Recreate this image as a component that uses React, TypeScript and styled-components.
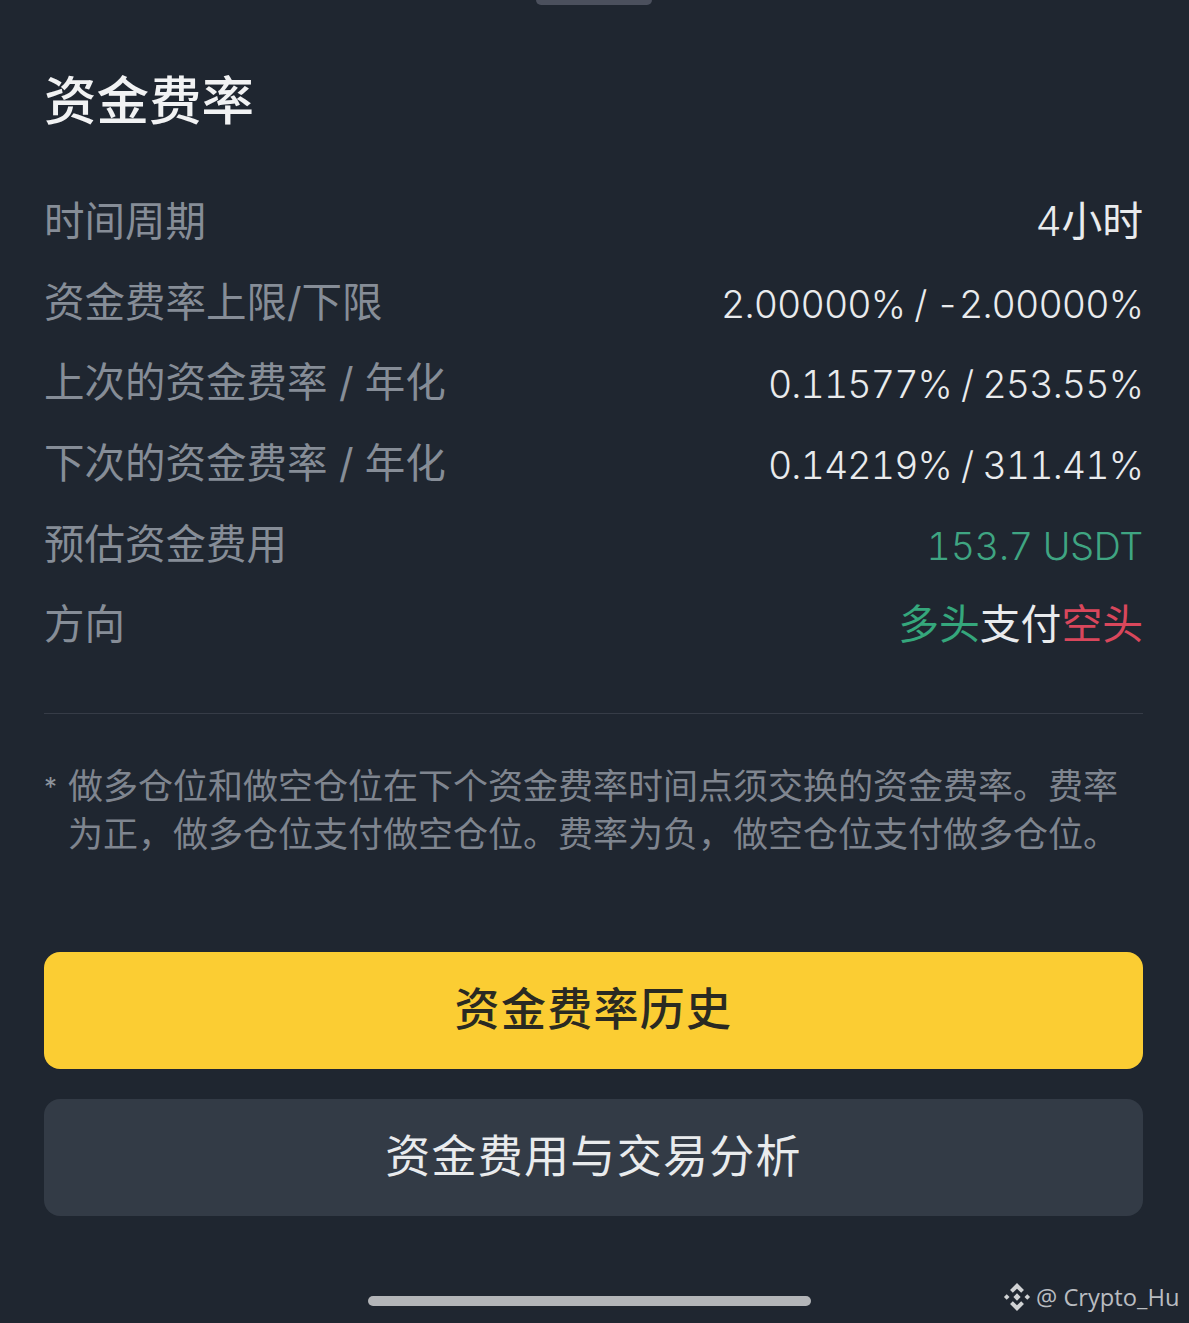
import React from "react";
import styled, { createGlobalStyle } from "styled-components";

const FONT = `Inter, "Noto Sans CJK SC", sans-serif`;

const Global = createGlobalStyle`
  html, body { margin: 0; padding: 0; background: #1f2630; }
  #root { width: 1189px; height: 1323px; }
`;

const Sheet = styled.div`
  position: relative;
  width: 1189px;
  height: 1323px;
  box-sizing: border-box;
  padding: 0 46px 0 44px;
  overflow: hidden;
  background: #1f2630;
  font-family: ${FONT};
  display: flex;
  flex-direction: column;
`;

const Grabber = styled.div`
  align-self: center;
  width: 116px;
  height: 5px;
  flex: none;
  border-radius: 0 0 6px 6px;
  background: #4b505d;
`;

const Title = styled.h1`
  margin: 65px 0 0 0;
  height: 62px;
  font-size: 52.5px;
  line-height: 62px;
  font-weight: 500;
  color: #f1f2f3;
`;

const Rows = styled.div`
  margin-top: 46px;
  display: flex;
  flex-direction: column;
`;

const Row = styled.div`
  height: 80.7px;
  display: flex;
  align-items: center;
  justify-content: space-between;
`;

const Label = styled.span`
  font-size: 40.5px;
  font-weight: 400;
  color: #868d97;
  white-space: nowrap;
`;

const Value = styled.span<{ $tone?: string }>`
  font-size: 37.6px;
  font-weight: 350;
  padding-top: 10px;
  font-variant-numeric: tabular-nums;
  letter-spacing: ${(p) => (p.$tone ? "-0.2px" : "-0.9px")};
  word-spacing: 0;
  color: ${(p) => p.$tone ?? "#e9ebed"};
  white-space: nowrap;
`;

const CjkValue = styled.span`
  font-size: 40.8px;
  font-weight: 400;
  color: #e9ebed;
  white-space: nowrap;
`;

const Digit = styled.span`
  font-weight: 300;
`;

const Tone = styled.span<{ $tone: string }>`
  color: ${(p) => p.$tone};
`;

const Divider = styled.hr`
  margin: 51px 0 0 0;
  border: 0;
  height: 1px;
  background: #363c47;
`;

const Note = styled.div`
  margin-top: 49px;
  display: flex;
  font-size: 35px;
  line-height: 47.5px;
  font-weight: 400;
  color: #7f858f;
`;

const Star = styled.span`
  flex: none;
  width: 24px;
  font-size: 26px;
  color: #8d939c;
`;

const NoteBody = styled.p`
  margin: 0;
  width: 1060px;
`;

const Actions = styled.div`
  margin-top: 94px;
  display: flex;
  flex-direction: column;
  gap: 30px;
`;

const Action = styled.button<{ $primary?: boolean }>`
  height: 117px;
  border: 0;
  padding: 0 0 9px 0;
  border-radius: 16px;
  font-family: ${FONT};
  font-size: 45px;
  letter-spacing: 1.3px;
  font-weight: ${(p) => (p.$primary ? 500 : 400)};
  background: ${(p) => (p.$primary ? "#fbcd33" : "#333b46")};
  color: ${(p) => (p.$primary ? "#2a2a22" : "#e9ebed")};
`;

const HomeBar = styled.div`
  position: absolute;
  left: 368px;
  top: 1296px;
  width: 443px;
  height: 10px;
  border-radius: 5px;
  background: #b3b5b8;
`;

const Watermark = styled.div`
  position: absolute;
  left: 1002px;
  top: 1281px;
  display: flex;
  align-items: center;
  gap: 4px;
  font-family: "Open Sans", sans-serif;
  font-size: 23.7px;
  line-height: 32px;
  color: #b9bcc0;
  white-space: nowrap;
`;

const Logo = () => (
  <svg width="30" height="30" viewBox="0 0 28 28" fill="#d0d2d4" aria-hidden="true">
    <path d="M14 1l6.5 6.5-2.6 2.6L14 6.2l-3.9 3.9-2.6-2.6z" />
    <path d="M14 27l6.5-6.5-2.6-2.6L14 21.8l-3.9-3.9-2.6 2.6z" />
    <path d="M14 10.6l3.4 3.4-3.4 3.4-3.4-3.4z" />
    <path d="M4.4 11.4L7 14l-2.6 2.6L1.8 14z" />
    <path d="M23.6 11.4L26.2 14l-2.6 2.6L21 14z" />
  </svg>
);

const rows = [
  ["资金费率上限/下限", "2.00000% / -2.00000%"],
  ["上次的资金费率 / 年化", "0.11577% / 253.55%"],
  ["下次的资金费率 / 年化", "0.14219% / 311.41%"],
];

export default function App() {
  return (
    <Sheet>
      <Global />
      <Grabber />
      <Title>资金费率</Title>
      <Rows>
        <Row>
          <Label>时间周期</Label>
          <CjkValue>
            <Digit>4</Digit>小时
          </CjkValue>
        </Row>
        {rows.map(([label, value]) => (
          <Row key={label}>
            <Label>{label}</Label>
            <Value>{value}</Value>
          </Row>
        ))}
        <Row>
          <Label>预估资金费用</Label>
          <Value $tone="#3fa582">153.7 USDT</Value>
        </Row>
        <Row>
          <Label>方向</Label>
          <CjkValue>
            <Tone $tone="#35a77c">多头</Tone>支付<Tone $tone="#d9475c">空头</Tone>
          </CjkValue>
        </Row>
      </Rows>
      <Divider />
      <Note>
        <Star>*</Star>
        <NoteBody>
          做多仓位和做空仓位在下个资金费率时间点须交换的资金费率。费率为正，做多仓位支付做空仓位。费率为负，做空仓位支付做多仓位。
        </NoteBody>
      </Note>
      <Actions>
        <Action $primary>资金费率历史</Action>
        <Action>资金费用与交易分析</Action>
      </Actions>
      <HomeBar />
      <Watermark>
        <Logo />
        <span>@ Crypto_Hu</span>
      </Watermark>
    </Sheet>
  );
}
